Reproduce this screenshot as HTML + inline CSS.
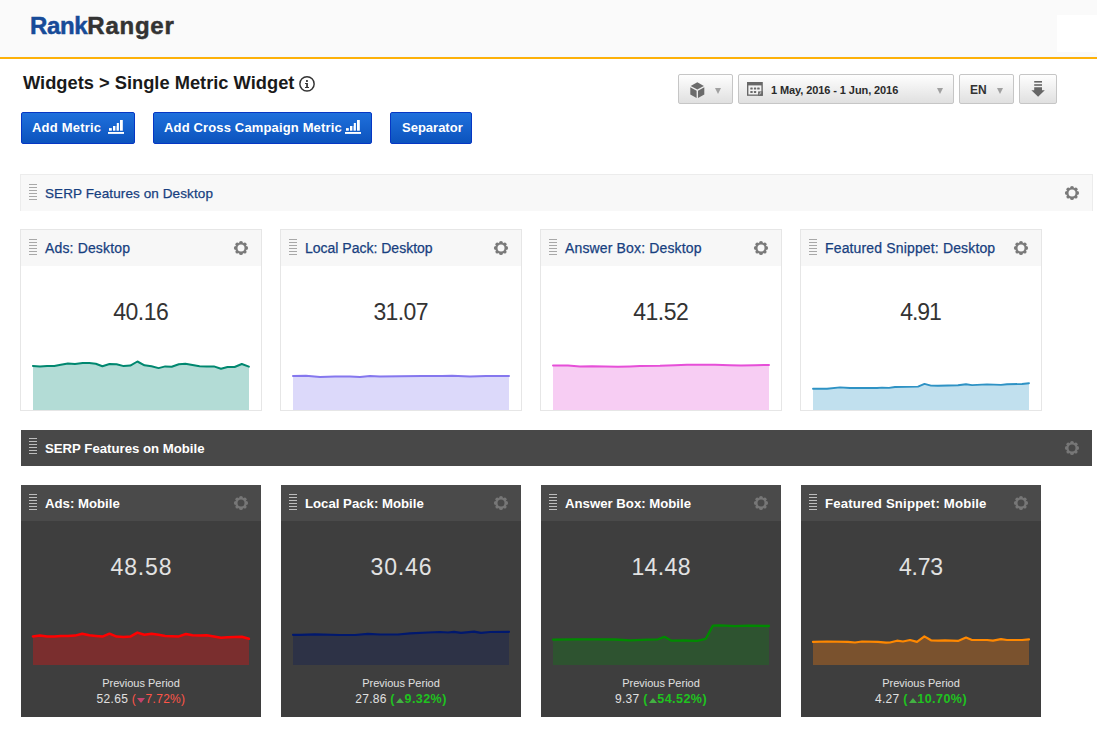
<!DOCTYPE html>
<html><head><meta charset="utf-8">
<style>
*{box-sizing:border-box;margin:0;padding:0}
html,body{width:1097px;height:748px;overflow:hidden;background:#fff;font-family:"Liberation Sans",sans-serif;position:relative}
.abs{position:absolute}
#hdr{position:absolute;left:0;top:0;width:1097px;height:57px;background:#fafafa}
#hdrline{position:absolute;left:0;top:57px;width:1097px;height:2px;background:#fdb10a}
#hdrblue{position:absolute;left:0;top:56px;width:1097px;height:1px;background:#f6f9fc}
#hdrwhite{position:absolute;left:1057px;top:15px;width:40px;height:37px;background:#fff}
#logo{position:absolute;left:30px;top:11px;font-weight:bold;font-size:24px;letter-spacing:0.75px;color:#333;white-space:nowrap;line-height:30px;-webkit-text-stroke:0.5px #333}
#logo b{color:#174b98;-webkit-text-stroke:0.5px #174b98;letter-spacing:-0.35px}
#title{position:absolute;left:23px;top:71px;font-weight:bold;font-size:18.3px;color:#1a1a1a;white-space:nowrap;line-height:24px}
#info{position:absolute;left:299px;top:76px}
.btn{position:absolute;top:112px;height:32px;border:1px solid #0637c4;border-radius:2px;background:linear-gradient(#1f70dc,#0c53bd);color:#fff;font-weight:bold;font-size:13px;line-height:30px;white-space:nowrap}
.btn span{position:absolute;top:0}
.bars{position:absolute;top:7px}
.tb{position:absolute;top:74px;height:30px;border:1px solid #c6c6c6;border-radius:2px;background:linear-gradient(#fefefe,#e0e0e0)}
.dd{position:absolute;width:0;height:0;border-left:3.5px solid transparent;border-right:3.5px solid transparent;border-top:6.5px solid #a0a0a0}
.tbtext{position:absolute;font-weight:bold;font-size:11px;color:#2a2a2a;white-space:nowrap;line-height:14px}
#lbar{position:absolute;left:20px;top:174px;width:1073px;height:37px;background:#f8f8f8;border:1px solid #ececec;border-bottom:none}
#dbar{position:absolute;left:21px;top:430px;width:1071px;height:36px;background:#484848}
.bartitle{position:absolute;left:24px;top:11px;font-size:13.5px;white-space:nowrap;line-height:16px}
#lbar .bartitle{color:#173f80;-webkit-text-stroke:0.25px #173f80;letter-spacing:0.1px}
#dbar .bartitle{color:#fff;font-weight:bold;font-size:13.2px;top:11px}
.handle{position:absolute;left:8px;width:8px;height:16px}
.handle i{display:block;height:1px;background:#a8a8a8;margin-bottom:2px}
.handle.hd i{background:#bdbdbd}
#lbar .handle{top:9px}
#dbar .handle{top:8px}
.gear{position:absolute;color:#7a7a7a}
#lbar .gear{left:1043px;top:10px}
#dbar .gear{left:1043px;top:10px;color:#777}
.lcard{position:absolute;top:229px;width:242px;height:182px;border:1px solid #e6e6e6;background:#fff}
.lhead{position:absolute;left:0;top:0;width:240px;height:36px;background:#f7f7f7}
.lhead .handle{top:9px}
.ltitle{position:absolute;left:24px;top:10px;font-size:14px;color:#173f80;-webkit-text-stroke:0.25px #173f80;letter-spacing:0.15px;white-space:nowrap;line-height:16px}
.lhead .gear{left:212px;top:10px}
.dcard{position:absolute;top:485px;width:240px;height:232px;background:#3e3e3e}
.dhead{position:absolute;left:0;top:0;width:240px;height:36px;background:#4a4a4a}
.dhead .handle{top:9px}
.dtitle{position:absolute;left:24px;top:11px;font-size:13.2px;font-weight:bold;color:#fff;white-space:nowrap;line-height:16px}
.dhead .gear{left:212px;top:10px;color:#777}
.bignum{position:absolute;left:0;width:100%;text-align:center;top:68px;font-size:23px;color:#333;line-height:28px}
.dnum{top:68px;color:#e2e2e2}
.prev{position:absolute;left:0;width:100%;text-align:center;top:191px;font-size:11px;color:#e0e0e0;line-height:14px}
.prevval{position:absolute;left:0;width:100%;text-align:center;top:206px;font-size:12px;color:#e0e0e0;line-height:16px;letter-spacing:0.3px}
.down{color:#ff5548}
.up{color:#1fc21f;font-weight:bold;letter-spacing:0.45px;font-size:12.5px}
.tri{display:inline-block;width:0;height:0;border-left:4px solid transparent;border-right:4px solid transparent;vertical-align:0px;margin:0 0.5px 0 1px}
.down .tri{border-top:5.5px solid #c4436a}
.up .tri{border-bottom:5.5px solid #44b044}
#charts{position:absolute;left:0;top:0}
</style></head><body>
<svg width="0" height="0" style="position:absolute"><defs><mask id="gmask" maskUnits="userSpaceOnUse" x="-8" y="-8" width="16" height="16"><rect x="-8" y="-8" width="16" height="16" fill="#fff"/><circle r="3.5" fill="#000"/></mask><g id="gearsym" mask="url(#gmask)" fill="currentColor"><circle cx="5.20" cy="0.00" r="1.9"/><circle cx="3.68" cy="3.68" r="1.9"/><circle cx="0.00" cy="5.20" r="1.9"/><circle cx="-3.68" cy="3.68" r="1.9"/><circle cx="-5.20" cy="0.00" r="1.9"/><circle cx="-3.68" cy="-3.68" r="1.9"/><circle cx="-0.00" cy="-5.20" r="1.9"/><circle cx="3.68" cy="-3.68" r="1.9"/><circle r="5.15"/></g></defs></svg>
<div id="hdr"></div>
<div id="hdrblue"></div><div id="hdrline"></div>
<div id="hdrwhite"></div>
<div id="logo"><b>Rank</b>Ranger</div>
<div id="title">Widgets &gt; Single Metric Widget</div>
<svg id="info" width="16" height="17" viewBox="0 0 16 17"><circle cx="8" cy="7.9" r="7.15" fill="none" stroke="#333" stroke-width="1.45"/><rect x="7.0" y="4.1" width="1.9" height="1.8" fill="#333"/><path d="M6.0 7.1H8.9V11.0H10.0V11.9H6.0V11.0H7.2V8.0H6.0Z" fill="#333"/></svg>

<div class="btn" style="left:21px;width:114px"><span style="left:10px;letter-spacing:0.2px">Add Metric</span>
<svg class="bars" style="left:86px" width="16" height="15" viewBox="0 0 16 15"><rect x="1.0" y="8.1" width="2.8" height="2.6" fill="#fff"/><rect x="5.0" y="6" width="2.0" height="4.7" fill="#fff"/><rect x="7.0" y="6" width="1.8" height="4.7" fill="#fff" opacity="0.4"/><rect x="8.8" y="3" width="2.1" height="7.7" fill="#fff"/><rect x="12.0" y="0" width="2.8" height="10.7" fill="#fff"/><rect x="0" y="12" width="16" height="1.9" fill="#fff"/></svg></div>
<div class="btn" style="left:153px;width:219px"><span style="left:10px;letter-spacing:0.15px">Add Cross Campaign Metric</span>
<svg class="bars" style="left:191px" width="16" height="15" viewBox="0 0 16 15"><rect x="1.0" y="8.1" width="2.8" height="2.6" fill="#fff"/><rect x="5.0" y="6" width="2.0" height="4.7" fill="#fff"/><rect x="7.0" y="6" width="1.8" height="4.7" fill="#fff" opacity="0.4"/><rect x="8.8" y="3" width="2.1" height="7.7" fill="#fff"/><rect x="12.0" y="0" width="2.8" height="10.7" fill="#fff"/><rect x="0" y="12" width="16" height="1.9" fill="#fff"/></svg></div>
<div class="btn" style="left:390px;width:82px"><span style="left:11px">Separator</span></div>

<div class="tb" style="left:678px;width:55px">
<svg class="abs" style="left:11px;top:7px" width="15" height="16" viewBox="0 0 15 16"><path d="M7.3 0.2L13.9 3.9 7.3 7.5 0.7 3.9Z" fill="#6b6b6b"/><path d="M0.3 5.3L6.6 8.8V15.9L0.3 12.4Z" fill="#6b6b6b"/><path d="M14.3 5.3L8.0 8.8V15.9L14.3 12.4Z" fill="#6b6b6b"/></svg>
<div class="dd" style="left:36px;top:13px"></div></div>
<div class="tb" style="left:738px;width:216px">
<svg class="abs" style="left:8px;top:7px" width="16" height="15" viewBox="0 0 16 15"><rect x="0" y="0" width="15.8" height="13.8" fill="#686868"/><rect x="1.4" y="3.4" width="13" height="9.1" fill="#f2f2f2"/><g fill="#6a6a6a"><rect x="3.3" y="5.4" width="2.4" height="2.1" rx="0.5"/><rect x="6.9" y="5.4" width="2.3" height="2.1" rx="0.5"/><rect x="10.2" y="5.4" width="2.5" height="2.1" rx="0.5"/><rect x="3.3" y="9" width="2.4" height="1.9" rx="0.5"/><rect x="6.9" y="9" width="2.3" height="1.9" rx="0.5"/></g><rect x="11.1" y="9.4" width="4.7" height="4.4" fill="#686868"/><path d="M12.3 12.6L13.0 10.6H14.3V11.3H13.5L13.1 12.6Z" fill="#e8e8e8"/></svg>
<div class="tbtext" style="left:32px;top:8px;letter-spacing:-0.09px">1 May, 2016 - 1 Jun, 2016</div>
<div class="dd" style="left:198px;top:13px"></div></div>
<div class="tb" style="left:959px;width:55px">
<div class="tbtext" style="left:10px;top:8px;font-size:12px;color:#333">EN</div>
<div class="dd" style="left:37px;top:13px"></div></div>
<div class="tb" style="left:1019px;width:38px">
<svg class="abs" style="left:11px;top:5px" width="16" height="17" viewBox="0 0 16 17"><rect x="3.2" y="1" width="7.8" height="1.6" fill="#666"/><rect x="3.2" y="4.2" width="7.8" height="1.6" fill="#666"/><path d="M3.2 7.3H11V10.3H13.8L7.1 16.8L0.4 10.3H3.2Z" fill="#666"/></svg></div>

<div id="lbar"><div class="handle "><i></i><i></i><i></i><i></i><i></i><i></i></div><span class="bartitle">SERP Features on Desktop</span><svg class="gear" width="16" height="16" viewBox="-8 -8 16 16"><use href="#gearsym"/></svg></div>
<div id="dbar"><div class="handle hd"><i></i><i></i><i></i><i></i><i></i><i></i></div><span class="bartitle">SERP Features on Mobile</span><svg class="gear" width="16" height="16" viewBox="-8 -8 16 16"><use href="#gearsym"/></svg></div>

<div class="lcard" style="left:20px">
  <div class="lhead"><div class="handle "><i></i><i></i><i></i><i></i><i></i><i></i></div><span class="ltitle">Ads: Desktop</span><svg class="gear" width="16" height="16" viewBox="-8 -8 16 16"><use href="#gearsym"/></svg></div>
  <div class="bignum" style="letter-spacing:-0.5px;text-indent:-0.5px">40.16</div>
</div><div class="lcard" style="left:280px">
  <div class="lhead"><div class="handle "><i></i><i></i><i></i><i></i><i></i><i></i></div><span class="ltitle" style="letter-spacing:0px">Local Pack: Desktop</span><svg class="gear" width="16" height="16" viewBox="-8 -8 16 16"><use href="#gearsym"/></svg></div>
  <div class="bignum" style="letter-spacing:-0.6px;text-indent:-0.6px">31.07</div>
</div><div class="lcard" style="left:540px">
  <div class="lhead"><div class="handle "><i></i><i></i><i></i><i></i><i></i><i></i></div><span class="ltitle">Answer Box: Desktop</span><svg class="gear" width="16" height="16" viewBox="-8 -8 16 16"><use href="#gearsym"/></svg></div>
  <div class="bignum" style="letter-spacing:-0.55px;text-indent:-0.55px">41.52</div>
</div><div class="lcard" style="left:800px">
  <div class="lhead"><div class="handle "><i></i><i></i><i></i><i></i><i></i><i></i></div><span class="ltitle">Featured Snippet: Desktop</span><svg class="gear" width="16" height="16" viewBox="-8 -8 16 16"><use href="#gearsym"/></svg></div>
  <div class="bignum" style="letter-spacing:-1.1px;text-indent:-1.1px">4.91</div>
</div><div class="dcard" style="left:21px">
  <div class="dhead"><div class="handle hd"><i></i><i></i><i></i><i></i><i></i><i></i></div><span class="dtitle">Ads: Mobile</span><svg class="gear" width="16" height="16" viewBox="-8 -8 16 16"><use href="#gearsym"/></svg></div>
  <div class="bignum dnum" style="letter-spacing:0.85px;text-indent:0.85px">48.58</div>
  <div class="prev">Previous Period</div>
  <div class="prevval">52.65 <span class="down">(<i class="tri"></i>7.72%)</span></div>
</div><div class="dcard" style="left:281px">
  <div class="dhead"><div class="handle hd"><i></i><i></i><i></i><i></i><i></i><i></i></div><span class="dtitle">Local Pack: Mobile</span><svg class="gear" width="16" height="16" viewBox="-8 -8 16 16"><use href="#gearsym"/></svg></div>
  <div class="bignum dnum" style="letter-spacing:0.85px;text-indent:0.85px">30.46</div>
  <div class="prev">Previous Period</div>
  <div class="prevval">27.86 <span class="up">(<i class="tri"></i>9.32%)</span></div>
</div><div class="dcard" style="left:541px">
  <div class="dhead"><div class="handle hd"><i></i><i></i><i></i><i></i><i></i><i></i></div><span class="dtitle">Answer Box: Mobile</span><svg class="gear" width="16" height="16" viewBox="-8 -8 16 16"><use href="#gearsym"/></svg></div>
  <div class="bignum dnum" style="letter-spacing:0.4px;text-indent:0.4px">14.48</div>
  <div class="prev">Previous Period</div>
  <div class="prevval">9.37 <span class="up">(<i class="tri"></i>54.52%)</span></div>
</div><div class="dcard" style="left:801px">
  <div class="dhead"><div class="handle hd"><i></i><i></i><i></i><i></i><i></i><i></i></div><span class="dtitle" style="letter-spacing:0.17px">Featured Snippet: Mobile</span><svg class="gear" width="16" height="16" viewBox="-8 -8 16 16"><use href="#gearsym"/></svg></div>
  <div class="bignum dnum" style="letter-spacing:-0.3px;text-indent:-0.3px">4.73</div>
  <div class="prev">Previous Period</div>
  <div class="prevval">4.27 <span class="up">(<i class="tri"></i>10.70%)</span></div>
</div>

<svg id="charts" width="1097" height="748" viewBox="0 0 1097 748">
<polygon points="33.0,410.0 33.0,365.9 40.0,366.4 47.1,365.9 54.3,366.1 60.8,364.8 67.9,363.5 75.0,363.9 82.7,363.1 89.3,363.1 95.8,363.7 102.4,366.2 109.5,364.0 116.6,364.2 123.7,366.1 130.3,365.6 137.4,361.5 144.5,365.3 151.5,366.2 158.6,368.1 165.2,366.4 171.7,366.7 178.8,364.2 185.4,363.7 192.5,365.0 199.6,366.2 206.7,366.4 213.9,366.4 221.0,368.8 227.5,367.0 234.6,367.0 241.8,364.0 249.0,366.6 249.0,410.0" fill="#b3dcd6"/>
<polyline points="32.9,365.9 40.0,366.4 47.1,365.9 54.3,366.1 60.8,364.8 67.9,363.5 75.0,363.9 82.7,363.1 89.3,363.1 95.8,363.7 102.4,366.2 109.5,364.0 116.6,364.2 123.7,366.1 130.3,365.6 137.4,361.5 144.5,365.3 151.5,366.2 158.6,368.1 165.2,366.4 171.7,366.7 178.8,364.2 185.4,363.7 192.5,365.0 199.6,366.2 206.7,366.4 213.9,366.4 221.0,368.8 227.5,367.0 234.6,367.0 241.8,364.0 248.9,366.6" fill="none" stroke="#00876f" stroke-width="2" stroke-linejoin="round" stroke-linecap="round"/>
<polygon points="293.0,410.0 293.0,375.9 306.0,375.8 320.0,376.9 335.0,376.5 350.0,376.6 360.0,377.0 370.0,375.9 380.0,376.4 400.0,376.3 422.0,375.9 442.0,376.1 452.0,375.8 470.0,376.4 486.0,375.9 509.0,376.1 509.0,410.0" fill="#dcd9fa"/>
<polyline points="293.0,375.9 306.0,375.8 320.0,376.9 335.0,376.5 350.0,376.6 360.0,377.0 370.0,375.9 380.0,376.4 400.0,376.3 422.0,375.9 442.0,376.1 452.0,375.8 470.0,376.4 486.0,375.9 509.0,376.1" fill="none" stroke="#8577ee" stroke-width="2" stroke-linejoin="round" stroke-linecap="round"/>
<polygon points="553.0,410.0 553.0,365.6 568.0,365.6 580.0,366.6 592.0,366.2 605.0,366.4 618.0,366.7 630.0,366.4 640.0,366.0 660.0,365.8 675.0,365.2 687.0,364.7 715.0,364.7 730.0,365.2 741.0,365.6 755.0,365.2 769.0,365.0 769.0,410.0" fill="#f7cdf3"/>
<polyline points="553.0,365.6 568.0,365.6 580.0,366.6 592.0,366.2 605.0,366.4 618.0,366.7 630.0,366.4 640.0,366.0 660.0,365.8 675.0,365.2 687.0,364.7 715.0,364.7 730.0,365.2 741.0,365.6 755.0,365.2 769.0,365.0" fill="none" stroke="#e64fd8" stroke-width="2" stroke-linejoin="round" stroke-linecap="round"/>
<polygon points="813.0,410.0 813.0,388.7 827.0,388.7 840.0,387.4 850.0,388.0 877.0,388.0 882.0,387.6 889.0,387.9 895.0,387.0 918.0,386.6 924.5,383.9 931.0,385.6 938.0,385.8 958.0,385.3 966.0,384.2 972.0,385.1 987.0,384.4 1001.0,384.9 1007.0,384.2 1022.0,384.0 1029.0,383.3 1029.0,410.0" fill="#c1e0ee"/>
<polyline points="813.0,388.7 827.0,388.7 840.0,387.4 850.0,388.0 877.0,388.0 882.0,387.6 889.0,387.9 895.0,387.0 918.0,386.6 924.5,383.9 931.0,385.6 938.0,385.8 958.0,385.3 966.0,384.2 972.0,385.1 987.0,384.4 1001.0,384.9 1007.0,384.2 1022.0,384.0 1029.0,383.3" fill="none" stroke="#2e92c4" stroke-width="1.9" stroke-linejoin="round" stroke-linecap="round"/>
<polygon points="33.0,665.0 33.0,636.4 40.0,635.6 47.1,636.6 54.3,636.4 60.8,635.9 67.9,635.9 75.0,635.6 82.2,633.7 89.3,635.3 95.8,635.9 102.4,636.6 109.5,633.7 116.6,636.6 123.7,637.0 130.3,636.6 137.4,632.6 144.4,634.8 151.5,633.7 158.6,634.8 165.2,635.9 171.7,636.2 178.8,636.4 186.0,634.0 192.5,635.3 199.6,635.5 206.7,635.3 213.9,636.4 221.0,637.7 227.5,637.3 234.6,637.0 241.8,636.7 249.0,638.8 249.0,665.0" fill="#7a2e2e"/>
<polyline points="32.9,636.4 40.0,635.6 47.1,636.6 54.3,636.4 60.8,635.9 67.9,635.9 75.0,635.6 82.2,633.7 89.3,635.3 95.8,635.9 102.4,636.6 109.5,633.7 116.6,636.6 123.7,637.0 130.3,636.6 137.4,632.6 144.4,634.8 151.5,633.7 158.6,634.8 165.2,635.9 171.7,636.2 178.8,636.4 186.0,634.0 192.5,635.3 199.6,635.5 206.7,635.3 213.9,636.4 221.0,637.7 227.5,637.3 234.6,637.0 241.8,636.7 248.9,638.8" fill="none" stroke="#ff0000" stroke-width="2.5" stroke-linejoin="round" stroke-linecap="round"/>
<polygon points="293.0,665.0 293.0,634.8 300.0,634.8 315.0,634.3 340.0,635.0 355.0,635.0 368.0,633.9 380.0,634.5 398.0,634.5 410.0,633.4 428.0,632.5 440.0,632.0 448.0,632.5 454.0,631.8 461.0,632.9 474.0,631.6 481.0,632.9 490.0,632.0 509.0,631.8 509.0,665.0" fill="#2d3246"/>
<polyline points="293.0,634.8 300.0,634.8 315.0,634.3 340.0,635.0 355.0,635.0 368.0,633.9 380.0,634.5 398.0,634.5 410.0,633.4 428.0,632.5 440.0,632.0 448.0,632.5 454.0,631.8 461.0,632.9 474.0,631.6 481.0,632.9 490.0,632.0 509.0,631.8" fill="none" stroke="#00186e" stroke-width="2.2" stroke-linejoin="round" stroke-linecap="round"/>
<polygon points="553.0,665.0 553.0,639.6 575.0,639.3 598.0,639.4 615.0,639.5 630.0,640.3 648.0,639.6 658.0,639.3 664.4,636.8 671.5,640.7 685.0,640.5 697.0,640.9 705.8,638.8 712.9,625.6 720.0,625.4 735.0,626.1 748.0,625.6 769.0,626.0 769.0,665.0" fill="#2e5330"/>
<polyline points="553.0,639.6 575.0,639.3 598.0,639.4 615.0,639.5 630.0,640.3 648.0,639.6 658.0,639.3 664.4,636.8 671.5,640.7 685.0,640.5 697.0,640.9 705.8,638.8 712.9,625.6 720.0,625.4 735.0,626.1 748.0,625.6 769.0,626.0" fill="none" stroke="#008a00" stroke-width="2.3" stroke-linejoin="round" stroke-linecap="round"/>
<polygon points="813.0,665.0 813.0,641.9 827.0,641.5 848.0,641.9 855.0,642.5 862.0,641.5 878.0,641.9 886.0,642.7 890.0,642.5 897.0,640.7 903.0,641.5 910.0,640.0 917.0,641.9 924.4,636.4 931.0,640.3 938.0,640.6 945.0,640.3 958.0,640.9 966.0,637.6 972.0,640.0 987.0,640.0 993.0,640.6 1001.0,639.1 1007.0,640.0 1022.0,640.0 1029.0,639.3 1029.0,665.0" fill="#7a522e"/>
<polyline points="813.0,641.9 827.0,641.5 848.0,641.9 855.0,642.5 862.0,641.5 878.0,641.9 886.0,642.7 890.0,642.5 897.0,640.7 903.0,641.5 910.0,640.0 917.0,641.9 924.4,636.4 931.0,640.3 938.0,640.6 945.0,640.3 958.0,640.9 966.0,637.6 972.0,640.0 987.0,640.0 993.0,640.6 1001.0,639.1 1007.0,640.0 1022.0,640.0 1029.0,639.3" fill="none" stroke="#ff8800" stroke-width="2.2" stroke-linejoin="round" stroke-linecap="round"/>
</svg>
</body></html>
